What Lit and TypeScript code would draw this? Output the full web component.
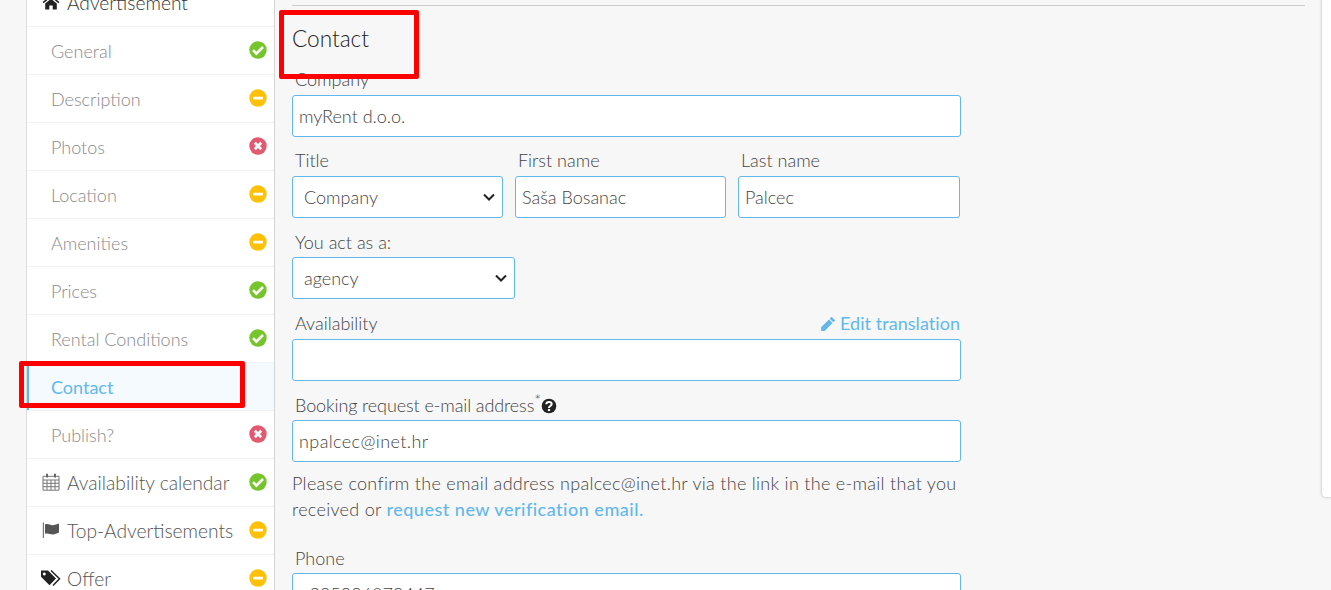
import { LitElement, html, css, svg } from "lit";
import { customElement } from "lit/decorators.js";

const check = svg`<path d="M5 10.200l3.400 3.400L15 7" fill="none" stroke="#fff" stroke-width="2.600"/>`;
const minus = svg`<rect x="5" y="8.700" width="10" height="2.700" rx=".6" fill="#fff"/>`;
const cross = svg`<path d="M6.800 6.800l6.400 6.400M13.200 6.800l-6.400 6.400" fill="none" stroke="#fff" stroke-width="2.700"/>`;
const statusMap: Record<string, [string, unknown]> = {
  ok: ["#76c52c", check],
  warn: ["#ffc107", minus],
  err: ["#e3596f", cross],
};
const status = (s: string) => {
  const [c, g] = statusMap[s];
  return html`<svg class="status" viewBox="0 0 20 20"><circle cx="10" cy="10" r="8.700" fill=${c}></circle>${g}</svg>`;
};

const homeIcon = html`<svg class="ic" viewBox="0 0 18 16"><path fill="#222" d="M9 1L.6 8l1 1.200L9 3.100l7.400 6.100 1-1.200L14.600 5.700V2h-2.200v1.800zM3.200 9.600V15.600h4.100v-4h3.400v4h4.100V9.600L9 4.800z"/></svg>`;
const calIcon = html`<svg class="ic" viewBox="0 0 18 18"><path fill="none" stroke="#777" stroke-width="1" d="M1 3.300h16v13.900H1zM1 7h16M1 10.300h16M1 13.700h16M5 7v10M9 7v10M13 7v10"/><path fill="none" stroke="#666" stroke-width="2" d="M5 .8v3.600M13 .8v3.600"/></svg>`;
const flagIcon = html`<svg class="ic" viewBox="0 0 18 18"><path fill="none" stroke="#777" stroke-width="1.200" d="M1.400 1.500v15.500"/><path fill="#555" d="M3 3.600c3-1.600 5.500 1.200 8 .6 2-.4 4-1 6-1.600v9c-2 1-4 1.600-6 1.800-2.600.2-5-1.800-8-.6z"/></svg>`;
const tagIcon = html`<svg class="ic tag" viewBox="0 0 21 18"><path fill="#222" d="M1 1.500h7l8 8-6.500 6.800-8.500-8.500zM4.300 3.500a1.500 1.500 0 1 0 .01 0z"/><path fill="none" stroke="#222" stroke-width="1.500" d="M11 1.500l8.500 8.300-6.500 6.700"/></svg>`;
const pencil = html`<svg class="pencil" viewBox="0 0 16 16"><path fill="#62b8ec" d="M11.600.8l3.600 3.600-1.900 1.900-3.600-3.600zM8.900 3.500l3.600 3.600-7.800 7.800H1.100v-3.600z"/></svg>`;
const help = html`<svg class="help" viewBox="0 0 16 16"><circle cx="8" cy="8" r="7.300" fill="#222"/><path fill="none" stroke="#fff" stroke-width="2" d="M5.300 6.300C5.400 4.700 6.500 4 8 4c1.600 0 2.700.9 2.700 2.100 0 1.800-2.700 1.900-2.700 3.600v.3"/><rect x="6.900" y="11" width="2.200" height="2.100" fill="#fff"/></svg>`;

const rows = [
  { label: "General", s: "ok" },
  { label: "Description", s: "warn" },
  { label: "Photos", s: "err" },
  { label: "Location", s: "warn" },
  { label: "Amenities", s: "warn" },
  { label: "Prices", s: "ok" },
  { label: "Rental Conditions", s: "ok" },
  { label: "Contact", s: "", active: true },
  { label: "Publish?", s: "err" },
];

@customElement("app-root")
export class AppRoot extends LitElement {
  static styles = css`
    :host {
      display: block;
      width: 1331px;
      height: 590px;
      overflow: hidden;
      position: relative;
      background: #f7f7f7;
      font-family: Lato, sans-serif;
      font-weight: 300;
      color: #333;
    }
    .page { display: flex; align-items: flex-start; height: 590px; }
    .side {
      width: 249px;
      margin: -21px 0 0 26px;
      flex: none;
      background: #fff;
      border-left: 1px solid #dcdcdc;
      border-right: 1px solid #d4d4d4;
      box-sizing: border-box;
    }
    .row {
      height: 48px;
      box-sizing: border-box;
      border-bottom: 1px solid #f3f3f3;
      display: flex;
      align-items: center;
      font-size: 18px;
      color: #8a8a8a;
      padding: 1px 6px 0 24px;
      justify-content: space-between;
    }
    .row.main { color: #555; padding-left: 15px; font-size: 19.2px; }
    .row.main .lab { display: flex; align-items: center; gap: 7px; margin-top: -2px; }
    .row.top { color: #333; }
    .row.active {
      background: #f5faff;
      color: #62b8ec;
      font-weight: 400;
      box-shadow: inset 2px 0 0 #62b8ec;
    }
    .ic { width: 18px; height: 18px; flex: none; }
    .ic.tag { width: 21px; margin-left: -2px; margin-right: -1px; }
    .status { width: 20px; height: 20px; flex: none; margin-top: -3px; }
    .main-col { width: 1013px; margin-left: 17px; flex: none; }
    hr { margin: 5px 0 0; border: 0; border-top: 1px solid #ccc; }
    h2 {
      margin: 19px 0 0;
      font-size: 22.600px;
      line-height: 27px;
      font-weight: 300;
      color: #222;
    }
    .form { width: 669px; display: flex; flex-direction: column; }
    label {
      display: block;
      font-size: 18px;
      line-height: 21px;
      color: #444;
      padding-left: 3px;
    }
    .company { margin-top: 17px; }
    .inp {
      height: 42px;
      box-sizing: border-box;
      background: #fff;
      border: 1px solid #62b8ec;
      border-radius: 3px;
      display: flex;
      align-items: center;
      padding: 0 6px;
      font-size: 18px;
      color: #444;
      white-space: nowrap;
      margin-top: 4px;
    }
    .company + .inp { margin-top: 5px; }
    .inp.sel { padding: 0 6px 0 11px; justify-content: space-between; }
    .inp.wide { letter-spacing: .4px; }
    .inp.gap5 { margin-top: 5px; }
    .chev { width: 14px; height: 10px; flex: none; }
    .grid { display: grid; grid-template-columns: 211px 211px 222px; gap: 12px; margin-top: 13px; }
    .grid .inp { margin-top: 5px; }
    .act { width: 223px; margin-top: 14px; }
    .availhead { display: flex; justify-content: space-between; margin-top: 14px; }
    .link {
      display: flex; align-items: center; gap: 4px;
      color: #62b8ec; font-size: 18px; line-height: 21px; font-weight: 400;
      letter-spacing: .05px; margin-right: 1px;
    }
    .pencil { width: 16px; height: 16px; }
    .book { margin-top: 14px; display: flex; align-items: center; padding-left: 3px; }
    .book label { padding: 0; letter-spacing: -.1px; }
    sup { font-size: 16px; line-height: 0; position: relative; top: 1px; vertical-align: super; }
    .help { width: 16px; height: 16px; }
    p {
      margin: 8px 0 0;
      font-size: 18px;
      line-height: 26px;
      color: #444;
      letter-spacing: .3px;
      white-space: nowrap;
    }
    p a { color: #62b8ec; font-weight: 500; text-decoration: none; letter-spacing: .5px; }
    .phone { margin-top: 26px; }
    .card {
      position: absolute;
      left: 1322px;
      top: -8px;
      width: 40px;
      height: 505px;
      background: #fff;
      border-radius: 4px;
      box-shadow: 0 0 3px rgba(0,0,0,.3);
    }
    .mark {
      position: absolute;
      border: 5px solid #f00;
      border-radius: 2px;
      box-sizing: border-box;
    }
    .m1 { left: 279px; top: 10px; width: 140px; height: 69px; }
    .m2 { left: 19px; top: 361px; width: 226px; height: 47px; }
  `;

  private chevron() {
    return html`<svg class="chev" viewBox="0 0 14 10"><path d="M2 2.500l5 5 5-5" fill="none" stroke="#222" stroke-width="2"/></svg>`;
  }

  render() {
    return html`
      <div class="page">
        <nav class="side">
          <div class="row main top"><span class="lab">${homeIcon}Advertisement</span></div>
          ${rows.map(
            (r) => html`<div class="row ${r.active ? "active" : ""}"><span>${r.label}</span>${r.s ? status(r.s) : ""}</div>`
          )}
          <div class="row main"><span class="lab">${calIcon}Availability calendar</span>${status("ok")}</div>
          <div class="row main"><span class="lab">${flagIcon}Top-Advertisements</span>${status("warn")}</div>
          <div class="row main"><span class="lab">${tagIcon}Offer</span>${status("warn")}</div>
        </nav>
        <main class="main-col">
          <hr />
          <h2>Contact</h2>
          <div class="form">
            <label class="company">Company</label>
            <div class="inp">myRent d.o.o.</div>
            <div class="grid">
              <div><label>Title</label><div class="inp sel"><span>Company</span>${this.chevron()}</div></div>
              <div><label>First name</label><div class="inp">Saša Bosanac</div></div>
              <div><label>Last name</label><div class="inp">Palcec</div></div>
            </div>
            <div class="act"><label>You act as a:</label><div class="inp sel"><span>agency</span>${this.chevron()}</div></div>
            <div class="availhead"><label>Availability</label><span class="link">${pencil}Edit translation</span></div>
            <div class="inp gap5"></div>
            <div class="book"><label>Booking request e-mail address<sup>*</sup></label>${help}</div>
            <div class="inp wide">npalcec@inet.hr</div>
            <p>Please confirm the email address npalcec@inet.hr via the link in the e-mail that you<br />received or <a>request new verification email.</a></p>
            <label class="phone">Phone</label>
            <div class="inp">+385996079447</div>
          </div>
        </main>
      </div>
      <div class="card"></div>
      <div class="mark m1"></div>
      <div class="mark m2"></div>
    `;
  }
}
